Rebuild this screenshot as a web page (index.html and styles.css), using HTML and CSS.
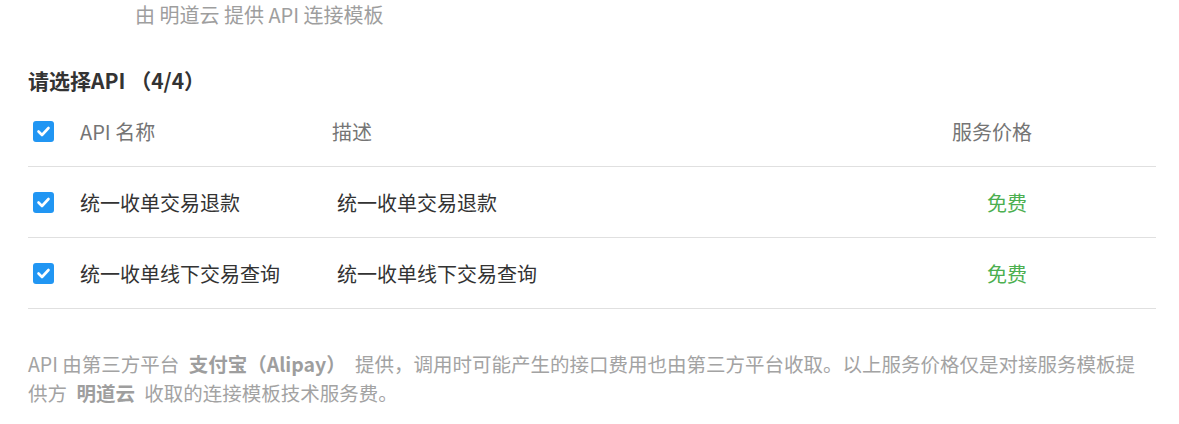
FILE: index.html
```html
<!DOCTYPE html>
<html lang="zh-CN">

<head>
    <meta charset="UTF-8">
    <meta name="viewport" content="width=device-width, initial-scale=1.0">
    <title>选择API</title>
    <link rel="stylesheet" href="styles.css">
</head>

<body>
    <div class="page">
        <div class="provider">由 明道云 提供 API 连接模板</div>

        <h2 class="title">请选择API （4/4）</h2>

        <div class="apilist">
            <div class="row head">
                <div class="cell check"><span class="box"><svg viewBox="0 0 21 21"><polyline points="5.5,10.5 9,14 15.5,7" /></svg></span></div>
                <div class="cell">API 名称</div>
                <div class="cell">描述</div>
                <div class="cell">服务价格</div>
            </div>
            <div class="row">
                <div class="cell check"><span class="box"><svg viewBox="0 0 21 21"><polyline points="5.5,10.5 9,14 15.5,7" /></svg></span></div>
                <div class="cell">统一收单交易退款</div>
                <div class="cell desc">统一收单交易退款</div>
                <div class="cell price">免费</div>
            </div>
            <div class="row">
                <div class="cell check"><span class="box"><svg viewBox="0 0 21 21"><polyline points="5.5,10.5 9,14 15.5,7" /></svg></span></div>
                <div class="cell">统一收单线下交易查询</div>
                <div class="cell desc">统一收单线下交易查询</div>
                <div class="cell price">免费</div>
            </div>
        </div>

        <p class="note">
            API 由第三方平台 <b>支付宝（Alipay）</b> 提供，调用时可能产生的接口费用也由第三方平台收取。以上服务价格仅是对接服务模板提供方 <b>明道云</b> 收取的连接模板技术服务费。
        </p>
    </div>
</body>

</html>
```

FILE: styles.css
```css
* {
    margin: 0;
    padding: 0;
    box-sizing: border-box;
}

body {
    background-color: white;
    font-family: "Noto Sans CJK SC", "Noto Sans", sans-serif;
    color: #333;
}

.page {
    padding: 0 23px 0 28px;
}

.provider {
    padding-left: 107px;
    font-size: 20px;
    line-height: 30px;
    color: #9e9e9e;
}

.title {
    margin-top: 35px;
    font-size: 21px;
    line-height: 30px;
    font-weight: bold;
    color: #333;
}

.apilist {
    margin-top: 1px;
}

.row {
    display: grid;
    grid-template-columns: 52px 252px 620px 1fr;
    align-items: center;
    height: 71px;
    border-bottom: 1px solid #e0e0e0;
    font-size: 20px;
}

.head {
    color: #757575;
}

.check {
    padding-left: 5px;
    display: flex;
    align-items: center;
}

.box {
    width: 21px;
    height: 21px;
    border-radius: 3px;
    background-color: #2196f3;
    display: block;
}

.box svg {
    display: block;
    width: 21px;
    height: 21px;
    fill: none;
    stroke: white;
    stroke-width: 2.6;
    stroke-linecap: round;
    stroke-linejoin: round;
}

.desc {
    padding-left: 5px;
}

.price {
    padding-left: 35px;
    color: #4caf50;
}

.note {
    margin-top: 40px;
    padding-right: 10px;
    font-size: 19.5px;
    line-height: 29px;
    color: #a3a3a3;
}

.note b {
    margin: 0 5px;
    color: #9e9e9e;
}
```
